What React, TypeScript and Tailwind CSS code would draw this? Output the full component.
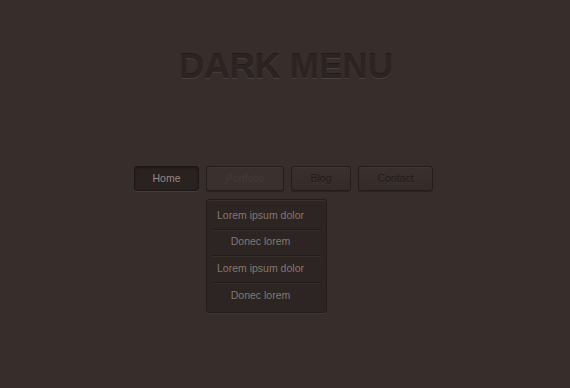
import React from 'react';

const items = [
  { label: 'Home', active: true },
  { label: 'Portfolio', hover: true, w: 'w-[78px]' },
  { label: 'Blog', w: 'w-[60px]' },
  { label: 'Contact', w: 'w-[75px]' },
];

const dropdown = ['Lorem ipsum dolor', 'Donec lorem', 'Lorem ipsum dolor', 'Donec lorem'];

const App: React.FC = () => {
  return (
    <div className="min-h-screen w-full bg-[#372d2b] font-['Liberation_Sans',Arial,sans-serif]">
      <div className="flex justify-center pt-[48px]">
        <h1 className="ml-[2px] text-[35px] font-bold leading-none text-[#2c2422] [text-shadow:0_1px_0_#4a3f3c,0_-1px_0_#231c1a]">
          DARK MENU
        </h1>
      </div>

      <nav className="mt-[83px] flex justify-center">
        <ul className="ml-[-3px] flex gap-[7px]">
          {items.map((item) => (
            <li key={item.label} className="relative">
              {item.active ? (
                <a className="flex h-[25px] w-[65px] items-center justify-center rounded-[3px] border border-[#1c1614] bg-[#2a2220] text-[10.5px] text-[#958a85] shadow-[0_1px_0_#453b38,inset_0_1px_2px_#1f1816]">
                  {item.label}
                </a>
              ) : (
                <a
                  className={`flex h-[25px] ${item.w} items-center justify-center rounded-[3px] border border-[#241d1b] text-[10.5px] shadow-[0_1px_0_#2a2220,inset_0_1px_0_#3f3532] ${
                    item.hover
                      ? 'bg-[#3a312e] text-[#433934]'
                      : 'bg-gradient-to-b from-[#3a302d] to-[#342b29] text-[#211a18] [text-shadow:0_1px_0_#3f3532]'
                  }`}
                >
                  {item.label}
                </a>
              )}
              {item.hover && (
                <div className="absolute left-0 top-[33px] w-[121px] rounded-[3px] border border-[#241d1b] bg-[#2d2523] px-[5px] py-[3px] shadow-[0_1px_0_#3f3532,inset_0_1px_0_#3a302d]">
                  {dropdown.map((d, i) => (
                    <div
                      key={i}
                      className={`flex h-[26.5px] items-center justify-center pr-[12px] text-[10.5px] text-[#83786f] ${
                        i < dropdown.length - 1 ? 'border-b border-[#231c1a] shadow-[0_1px_0_#362d2a]' : ''
                      }`}
                    >
                      {d}
                    </div>
                  ))}
                </div>
              )}
            </li>
          ))}
        </ul>
      </nav>
    </div>
  );
};

export default App;
